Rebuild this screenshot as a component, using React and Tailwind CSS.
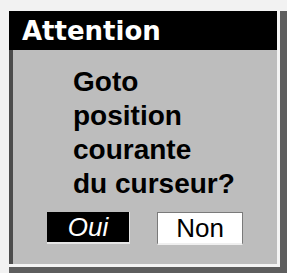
import React from 'react';

const App = () => {
    return (
        <div className="w-[287px] h-[273px] bg-[#f2f2f2] pl-[9px] pt-[11px] overflow-hidden">
            {/* dialog with dark drop edge */}
            <div className="w-[278px] h-[262px] bg-[#5e5e5e]">
                <div className="w-[271px] h-[256px] flex flex-col border-r-[3px] border-b-[3px] border-[#f4f4f4]">
                    {/* title bar */}
                    <div className="h-[39px] bg-black flex items-center pl-[13px] shrink-0">
                        <span className="text-white text-[26px] font-bold font-['DejaVu_Sans',sans-serif] leading-none">
                            Attention
                        </span>
                    </div>

                    {/* body */}
                    <div className="flex-1 bg-[#bdbdbd] border-l-[4px] border-[#4c4c4c] flex flex-col">
                        <div className="pl-[60px] pt-[15px] font-['Liberation_Sans',Arial,sans-serif] font-bold text-[28px] leading-[34px] text-black">
                            <div>Goto</div>
                            <div>position</div>
                            <div>courante</div>
                            <div>du curseur?</div>
                        </div>

                        <div className="flex gap-[27px] pl-[34px] mt-[11px] font-['Liberation_Sans',Arial,sans-serif]">
                            <div className="w-[83px] h-[32px] bg-black border-b-[2px] border-r-[1px] border-[#e6e6e6] flex items-center justify-center text-white italic text-[26px] leading-none">
                                Oui
                            </div>
                            <div className="w-[86px] h-[33px] bg-white border border-[#7a7a7a] border-b-[2px] border-b-[#efefef] flex items-center justify-center text-black text-[26px] leading-none">
                                Non
                            </div>
                        </div>
                    </div>
                </div>
            </div>
        </div>
    );
};

export default App;
